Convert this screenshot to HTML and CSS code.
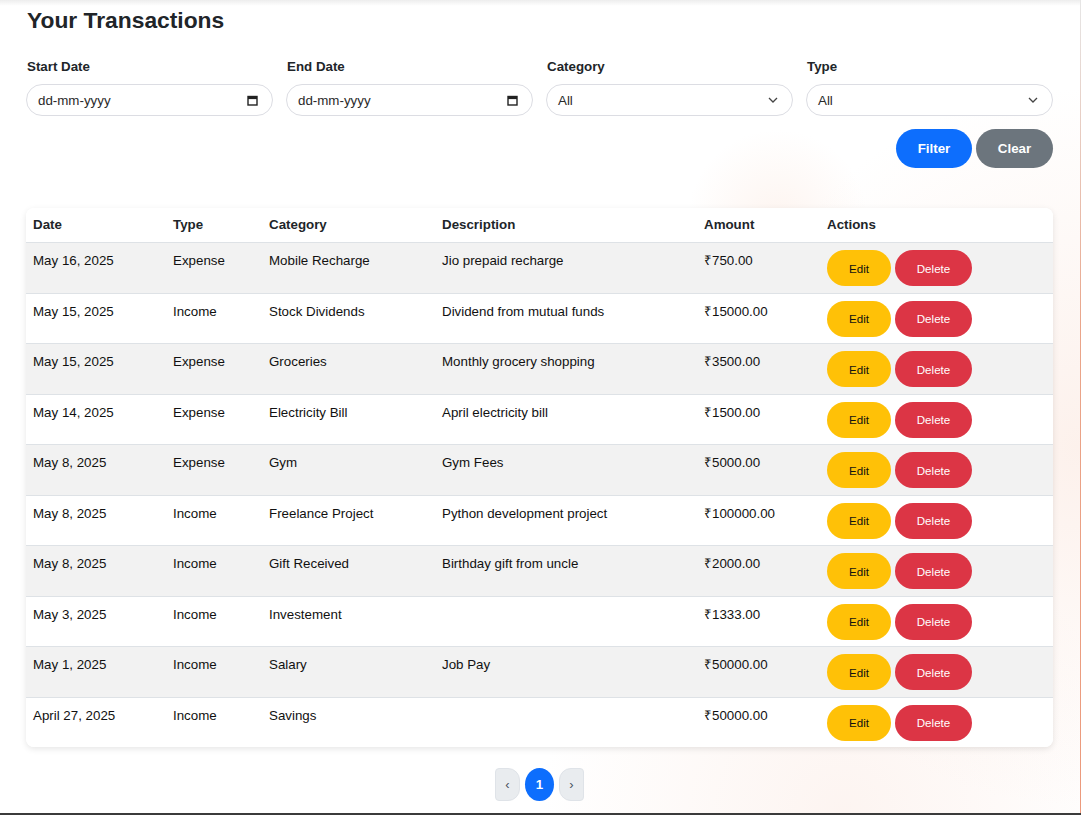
FILE: index.html
```html
<!DOCTYPE html>
<html lang="en">
<head>
<meta charset="utf-8">
<title>Your Transactions</title>
<link rel="stylesheet" href="styles.css">
</head>
<body>
<main class="panel">
  <h2 class="title">Your Transactions</h2>

  <form class="filters">
    <div class="field">
      <label class="field-label">Start Date</label>
      <div class="control">
        <span class="control-text">dd-mm-yyyy</span>
        <svg class="cal-icon" width="11" height="11" viewBox="0 0 11 11"><rect x="1" y="1.5" width="9" height="8.5" fill="none" stroke="#222" stroke-width="1.4"/><rect x="1" y="1.5" width="9" height="2.6" fill="#222"/></svg>
      </div>
    </div>
    <div class="field">
      <label class="field-label">End Date</label>
      <div class="control">
        <span class="control-text">dd-mm-yyyy</span>
        <svg class="cal-icon" width="11" height="11" viewBox="0 0 11 11"><rect x="1" y="1.5" width="9" height="8.5" fill="none" stroke="#222" stroke-width="1.4"/><rect x="1" y="1.5" width="9" height="2.6" fill="#222"/></svg>
      </div>
    </div>
    <div class="field">
      <label class="field-label">Category</label>
      <div class="control">
        <span class="control-text">All</span>
        <svg class="chev" width="10" height="6" viewBox="0 0 10 6"><path d="M1 1l4 4 4-4" fill="none" stroke="#444" stroke-width="1.3"/></svg>
      </div>
    </div>
    <div class="field">
      <label class="field-label">Type</label>
      <div class="control">
        <span class="control-text">All</span>
        <svg class="chev" width="10" height="6" viewBox="0 0 10 6"><path d="M1 1l4 4 4-4" fill="none" stroke="#444" stroke-width="1.3"/></svg>
      </div>
    </div>
  </form>

  <div class="filter-actions">
    <button class="btn btn-primary" type="button">Filter</button>
    <button class="btn btn-secondary" type="button">Clear</button>
  </div>

  <div class="table-card">
    <table class="tx-table">
      <colgroup>
        <col class="c-date"><col class="c-type"><col class="c-cat"><col class="c-desc"><col class="c-amt"><col class="c-act">
      </colgroup>
      <thead>
        <tr><th>Date</th><th>Type</th><th>Category</th><th>Description</th><th>Amount</th><th>Actions</th></tr>
      </thead>
      <tbody>
        <tr><td>May 16, 2025</td><td>Expense</td><td>Mobile Recharge</td><td>Jio prepaid recharge</td><td>₹750.00</td><td><div class="acts"><button class="sm sm-edit">Edit</button><button class="sm sm-del">Delete</button></div></td></tr>
        <tr><td>May 15, 2025</td><td>Income</td><td>Stock Dividends</td><td>Dividend from mutual funds</td><td>₹15000.00</td><td><div class="acts"><button class="sm sm-edit">Edit</button><button class="sm sm-del">Delete</button></div></td></tr>
        <tr><td>May 15, 2025</td><td>Expense</td><td>Groceries</td><td>Monthly grocery shopping</td><td>₹3500.00</td><td><div class="acts"><button class="sm sm-edit">Edit</button><button class="sm sm-del">Delete</button></div></td></tr>
        <tr><td>May 14, 2025</td><td>Expense</td><td>Electricity Bill</td><td>April electricity bill</td><td>₹1500.00</td><td><div class="acts"><button class="sm sm-edit">Edit</button><button class="sm sm-del">Delete</button></div></td></tr>
        <tr><td>May 8, 2025</td><td>Expense</td><td>Gym</td><td>Gym Fees</td><td>₹5000.00</td><td><div class="acts"><button class="sm sm-edit">Edit</button><button class="sm sm-del">Delete</button></div></td></tr>
        <tr><td>May 8, 2025</td><td>Income</td><td>Freelance Project</td><td>Python development project</td><td>₹100000.00</td><td><div class="acts"><button class="sm sm-edit">Edit</button><button class="sm sm-del">Delete</button></div></td></tr>
        <tr><td>May 8, 2025</td><td>Income</td><td>Gift Received</td><td>Birthday gift from uncle</td><td>₹2000.00</td><td><div class="acts"><button class="sm sm-edit">Edit</button><button class="sm sm-del">Delete</button></div></td></tr>
        <tr><td>May 3, 2025</td><td>Income</td><td>Investement</td><td></td><td>₹1333.00</td><td><div class="acts"><button class="sm sm-edit">Edit</button><button class="sm sm-del">Delete</button></div></td></tr>
        <tr><td>May 1, 2025</td><td>Income</td><td>Salary</td><td>Job Pay</td><td>₹50000.00</td><td><div class="acts"><button class="sm sm-edit">Edit</button><button class="sm sm-del">Delete</button></div></td></tr>
        <tr><td>April 27, 2025</td><td>Income</td><td>Savings</td><td></td><td>₹50000.00</td><td><div class="acts"><button class="sm sm-edit">Edit</button><button class="sm sm-del">Delete</button></div></td></tr>
      </tbody>
    </table>
  </div>

  <nav class="pager">
    <button class="pg pg-prev">‹</button>
    <button class="pg pg-active">1</button>
    <button class="pg pg-next">›</button>
  </nav>
</main>
</body>
</html>
```

FILE: styles.css
```css
html, body {
  margin: 0;
  padding: 0;
}

body {
  height: 815px;
  font-family: "Liberation Sans", Arial, sans-serif;
  font-size: 13.33px;
  color: #212529;
  background: linear-gradient(to bottom, #e6e6e6 0, #eaa58a 40%, #ec9a7c calc(100% - 2px), #3b3b3b calc(100% - 2px));
  overflow: hidden;
}

.panel {
  box-sizing: border-box;
  width: 1080px;
  height: 813px;
  padding: 7px 27px 0 26px;
  background-color: #fff;
  background-image:
    linear-gradient(to bottom, rgba(0, 0, 0, 0.07), rgba(0, 0, 0, 0) 6px),
    radial-gradient(circle at 100% 55%, rgba(248, 215, 200, 0.35), rgba(255, 255, 255, 0) 360px),
    radial-gradient(circle at 78% 100%, rgba(248, 220, 208, 0.3), rgba(255, 255, 255, 0) 300px),
    radial-gradient(circle at 72% 27%, rgba(250, 225, 212, 0.35), rgba(255, 255, 255, 0) 90px);
}

.title {
  margin: 0 0 23px 1px;
  font-size: 22.8px;
  line-height: 27px;
  font-weight: 700;
  color: #212529;
}

.filters {
  display: grid;
  grid-template-columns: repeat(4, 1fr);
  column-gap: 13px;
  margin: 0;
}

.field {
  display: flex;
  flex-direction: column;
}

.field-label {
  font-weight: 700;
  line-height: 20px;
  margin: 0 0 7px 1px;
}

.control {
  box-sizing: border-box;
  height: 32px;
  border: 1px solid #dcdde3;
  border-radius: 16px;
  background: #fff;
  display: flex;
  align-items: center;
  justify-content: space-between;
  padding: 0 14px 0 11px;
}

.control-text {
  color: #2a2a2a;
}

.filter-actions {
  display: flex;
  justify-content: flex-end;
  gap: 4px;
  margin-top: 13px;
}

.btn {
  height: 39px;
  border: 0;
  border-radius: 20px;
  padding: 0;
  font-family: inherit;
  font-size: 13.33px;
  font-weight: 700;
  color: #fff;
}

.btn-primary {
  width: 76px;
  background: #0d6efd;
}

.btn-secondary {
  width: 77px;
  background: #6c757d;
}

.table-card {
  margin-top: 40px;
  border-radius: 8px;
  overflow: hidden;
  background: #fff;
  box-shadow: 0 2px 6px rgba(0, 0, 0, 0.1);
}

.tx-table {
  width: 100%;
  border-collapse: collapse;
  table-layout: fixed;
}

.c-date { width: 140px; }
.c-type { width: 96px; }
.c-cat { width: 173px; }
.c-desc { width: 262px; }
.c-amt { width: 123px; }
.c-act { width: 233px; }

.tx-table th {
  text-align: left;
  font-weight: 700;
  line-height: 20px;
  padding: 7px 7px 7px;
  border-bottom: 1px solid #dee2e6;
  background: #fff;
}

.tx-table td {
  vertical-align: top;
  line-height: 20px;
  padding: 8px 7px 5.5px;
  border-bottom: 1px solid #dee2e6;
  color: #111;
}

.tx-table tbody tr:nth-child(odd) td {
  background: #f2f2f2;
}

.tx-table tbody tr:nth-child(even) td {
  background: #fff;
}

.tx-table tbody tr:last-child td {
  border-bottom: 0;
}

.acts {
  display: flex;
  gap: 4px;
  margin: -1px 0 1px;
}

.sm {
  height: 36px;
  border: 0;
  border-radius: 18px;
  padding: 0;
  font-family: inherit;
  font-size: 11.6px;
}

.sm-edit {
  width: 64px;
  background: #ffc107;
  color: #111;
}

.sm-del {
  width: 77px;
  background: #dc3545;
  color: #fff;
}

.pager {
  display: flex;
  justify-content: center;
  gap: 5px;
  margin-top: 21px;
}

.pg {
  height: 33px;
  border: 0;
  padding: 0;
  font-family: inherit;
}

.pg-prev, .pg-next {
  width: 25px;
  background: #e9ecef;
  color: #4a5260;
  font-size: 13px;
  border: 1px solid #dfe3e8;
}

.pg-prev {
  border-radius: 4px 12px 12px 4px;
}

.pg-next {
  border-radius: 12px 4px 4px 12px;
}

.pg-active {
  width: 29px;
  border-radius: 50%;
  background: #0d6efd;
  color: #fff;
  font-size: 13.33px;
  font-weight: 700;
}
```
